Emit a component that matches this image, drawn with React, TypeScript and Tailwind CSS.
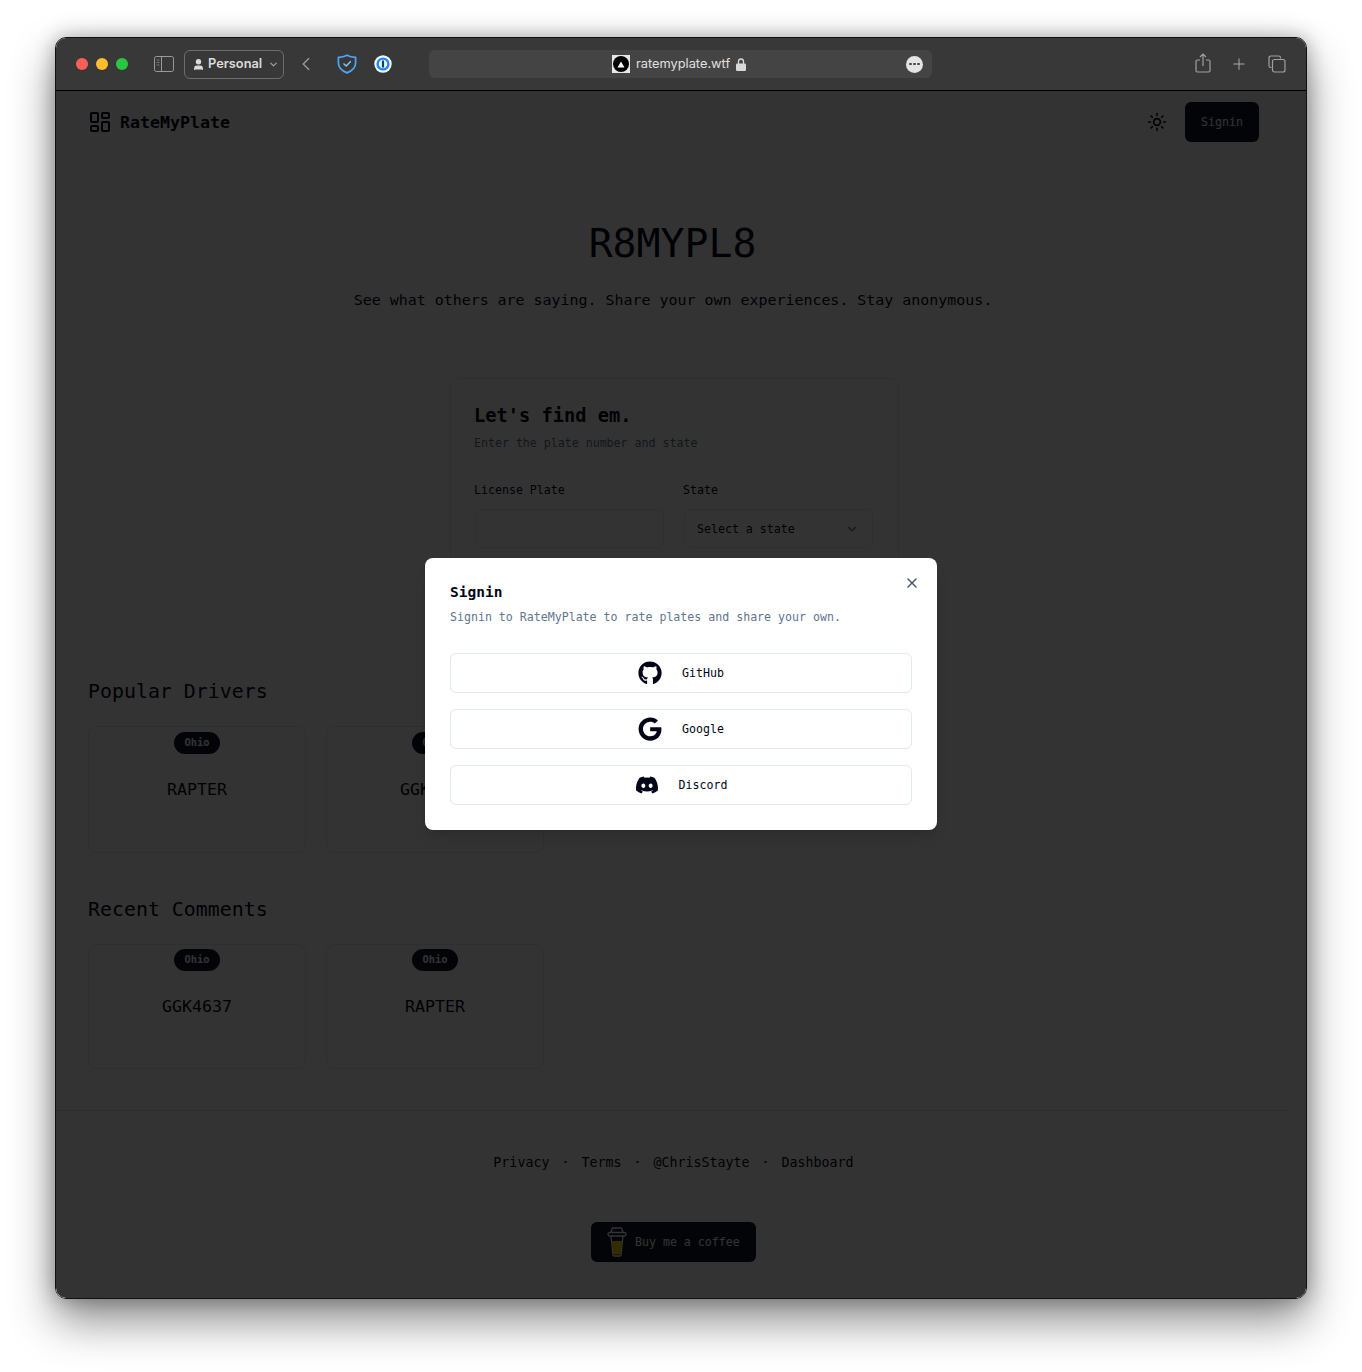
import { ChevronDown, ChevronLeft, LayoutDashboard, Plus, Sun, User, X } from 'lucide-react'
import type { ReactNode } from 'react'
import { FaDiscord, FaGithub, FaGoogle } from 'react-icons/fa'

const mono = 'font-["DejaVu_Sans_Mono","Liberation_Mono",monospace]'

function TitleBar() {
  return (
    <div className='h-[53px] shrink-0 flex items-center pl-5 border-b border-black bg-[#383838] font-["Inter",sans-serif]'>
      <div className="flex items-center gap-2">
        <span className="w-3 h-3 rounded-full bg-[#ff5f57]" />
        <span className="w-3 h-3 rounded-full bg-[#febc2e]" />
        <span className="w-3 h-3 rounded-full bg-[#28c840]" />
      </div>
      <svg className="ml-[26px]" width="20" height="16" viewBox="0 0 20 16" fill="none" stroke="#9a9a9a">
        <rect x="0.5" y="0.5" width="19" height="15" rx="2" />
        <path d="M7.5 1v14" />
        <path d="M2.5 4h3M2.5 6.5h3M2.5 9h3" stroke="#777" />
      </svg>
      <div className="ml-[10px] w-[100px] h-[29px] border border-[#6e6e6e] rounded-md flex items-center pl-[7px] text-[#dcdcdc]">
        <User size={13} fill="#dcdcdc" strokeWidth={2} />
        <span className="ml-[3px] text-[12.8px] font-semibold leading-none">Personal</span>
        <ChevronDown size={11} strokeWidth={2.4} className="ml-[6px] text-[#a5a5a5]" />
      </div>
      <ChevronLeft size={22} strokeWidth={1.5} className="ml-[11px] text-[#9a9a9a]" />
      <svg className="ml-5 mb-px" width="20" height="20" viewBox="0 0 20 20" fill="none" stroke="#4aa8f5" strokeWidth="1.7">
        <path d="M10 1.200C12.500 2.600 15.500 3.200 18.600 3.300V9C18.600 13.600 15 16.800 10 18.900C5 16.800 1.400 13.600 1.400 9V3.300C4.500 3.200 7.500 2.600 10 1.200Z" strokeLinejoin="round" />
        <path d="M6.500 9.500 9.200 12 13.800 7.200" stroke="#86c6f7" strokeWidth="1.4" />
      </svg>
      <svg className="ml-[17px]" width="18" height="18" viewBox="0 0 18 18">
        <circle cx="9" cy="9" r="8.7" fill="#f7f9fc" />
        <circle cx="9" cy="9" r="6.6" fill="#1a8cff" />
        <circle cx="9" cy="9" r="4.2" fill="#f7f9fc" />
        <rect x="7.900" y="5.500" width="2.200" height="7" rx="0.5" fill="#123a66" />
      </svg>
      <div className="ml-[37px] w-[503px] h-[28px] rounded-md bg-[#444444] flex items-center pl-[183px]">
        <span className="w-[18px] h-[18px] bg-[#e8e8e8] flex items-center justify-center">
          <span className="w-4 h-4 rounded-full bg-black flex items-center justify-center">
            <svg width="8" height="7" viewBox="0 0 8 7"><path d="M4 0.5 7.5 6.5H0.5Z" fill="#fff" /></svg>
          </span>
        </span>
        <span className="ml-[6px] pt-px text-[12.8px] leading-none text-[#e0e0e0]">ratemyplate.wtf</span>
        <svg className="ml-[6px]" width="10" height="13" viewBox="0 0 10 13">
          <path d="M2.5 6V3.5a2.5 2.5 0 0 1 5 0V6" fill="none" stroke="#d8d8d8" strokeWidth="1.3" />
          <rect y="5.5" width="10" height="7.5" rx="1.3" fill="#d8d8d8" />
        </svg>
        <span className="ml-[160px] w-[17px] h-[17px] rounded-full bg-[#e4e4e4] flex items-center justify-center gap-[1.5px]">
          <span className="w-[2.5px] h-[2.5px] rounded-full bg-[#444]" />
          <span className="w-[2.5px] h-[2.5px] rounded-full bg-[#444]" />
          <span className="w-[2.5px] h-[2.5px] rounded-full bg-[#444]" />
        </span>
      </div>
      <svg className="ml-[263px] -translate-y-px" width="16" height="20" viewBox="0 0 16 20" fill="none" stroke="#a0a0a0" strokeWidth="1.2">
        <path d="M5 7H2.500A1.500 1.500 0 0 0 1 8.500V17.500A1.500 1.500 0 0 0 2.500 19H13.500A1.500 1.500 0 0 0 15 17.500V8.500A1.500 1.500 0 0 0 13.500 7H11" />
        <path d="M8 13V1M5 4l3-3 3 3" />
      </svg>
      <Plus size={18} strokeWidth={1.4} className="ml-[19px] text-[#a8a8a8]" />
      <svg className="ml-[20px]" width="18" height="18" viewBox="0 0 18 18" fill="none" stroke="#a0a0a0" strokeWidth="1.2">
        <path d="M3.500 12.500H2.800A1.800 1.800 0 0 1 1 10.700V2.800A1.800 1.800 0 0 1 2.800 1H10.700A1.800 1.800 0 0 1 12.500 2.800V3.500" />
        <rect x="4.500" y="4.500" width="12.500" height="12.500" rx="2" />
      </svg>
    </div>
  )
}

function PlateCard({ plate, box, gap }: { plate: string; box: string; gap: string }) {
  return (
    <div className={`w-[218px] ${box} rounded-lg border border-slate-200 flex flex-col items-center`}>
      <span className="w-[46px] h-[22px] rounded-full bg-slate-900 text-slate-50 text-[10.4px] font-semibold flex items-center justify-center">
        Ohio
      </span>
      <span className={`${gap} text-[16.6px] leading-6 text-slate-950`}>{plate}</span>
    </div>
  )
}

function Page() {
  return (
    <div className={`w-[1233px] h-full bg-white text-slate-950 ${mono}`}>
      <header className="h-[61px] flex items-center pl-8 pr-[30px]">
        <LayoutDashboard size={24} strokeWidth={2} />
        <span className="ml-2 pt-[3px] text-[16.6px] font-bold">RateMyPlate</span>
        <Sun size={20} className="ml-auto" />
        <button className="ml-[18px] pt-0.5 w-[74px] h-10 rounded-md bg-slate-900 text-slate-50 text-[11.6px]">Signin</button>
      </header>

      <section className="mt-[61px] flex flex-col items-center">
        <h1 className="text-[39.8px] leading-[60px]">R8MYPL8</h1>
        <p className="mt-[15px] pl-px text-[14.95px] leading-6">
          See what others are saying. Share your own experiences. Stay anonymous.
        </p>
      </section>

      <section className="mt-[66px] ml-[394px] w-[449px] h-[272px] rounded-lg border border-slate-200 pt-[23px] pl-6 pr-6">
        <h2 className="text-[18.7px] leading-7 font-bold -ml-px">Let's find em.</h2>
        <p className="mt-[5px] text-[11.6px] leading-4 text-slate-500 -ml-px">Enter the plate number and state</p>
        <div className="mt-[31px] grid grid-cols-[189px_189px] gap-x-5">
          <label className="text-[11.6px] leading-4 -ml-px">License Plate</label>
          <label className="text-[11.6px] leading-4 -ml-px">State</label>
          <div className="mt-[11px] h-[39px] rounded-md border border-slate-200" />
          <div className="mt-[11px] h-[39px] rounded-md border border-slate-200 flex items-center justify-between pl-3 pr-[13px] text-[11.6px]">
            <span className="pt-0.5">Select a state</span>
            <ChevronDown size={14} className="text-slate-500" />
          </div>
        </div>
      </section>

      <section className="mt-[28px] pl-8">
        <h2 className="text-[19.9px] leading-7">Popular Drivers</h2>
        <div className="mt-5 flex gap-5">
          <PlateCard plate="RAPTER" box="h-[127px] pt-[5px]" gap="mt-6" />
          <PlateCard plate="GGK4637" box="h-[127px] pt-[5px]" gap="mt-6" />
        </div>
      </section>

      <section className="mt-[43px] pl-8">
        <h2 className="text-[19.9px] leading-7">Recent Comments</h2>
        <div className="mt-5 flex gap-5">
          <PlateCard plate="GGK4637" box="h-[125px] pt-1" gap="mt-6" />
          <PlateCard plate="RAPTER" box="h-[125px] pt-1" gap="mt-6" />
        </div>
      </section>

      <footer className="mt-[41px] border-t border-slate-200 flex flex-col items-center">
        <nav className="mt-[42px] pl-0.5 flex items-center text-[13.3px] leading-5">
          <span>Privacy</span>
          <span className="mx-3">·</span>
          <span>Terms</span>
          <span className="mx-3">·</span>
          <span>@ChrisStayte</span>
          <span className="mx-3">·</span>
          <span>Dashboard</span>
        </nav>
        <button className="mt-[49px] ml-0.5 w-[165px] h-10 rounded-md bg-slate-900 text-slate-50 text-[11.6px] flex items-center pl-4 gap-2">
          <svg width="20" height="30" viewBox="0 0 20 30" fill="none" stroke="#fff" strokeWidth="1.3">
            <path d="M4 9 6 28a1.500 1.500 0 0 0 1.500 1H12.500A1.500 1.500 0 0 0 14 28L16 9" />
            <path d="M4.800 14H15.200L13.800 27.500H6.200Z" fill="#ffdd00" stroke="none" />
            <rect x="1" y="5.500" width="18" height="3.500" rx="1.700" />
            <path d="M4 5.500 5 2a1.500 1.500 0 0 1 1.500-1H13.500A1.500 1.500 0 0 1 15 2l1 3.500" />
          </svg>
          <span className="pt-0.5">Buy me a coffee</span>
        </button>
      </footer>
    </div>
  )
}

function ProviderButton({ icon, label }: { icon: ReactNode; label: string }) {
  return (
    <button className="h-10 rounded-md border border-slate-200 flex items-center justify-center gap-5 text-[11.6px] text-slate-950">
      {icon}
      <span className="pt-0.5">{label}</span>
    </button>
  )
}

function SigninModal() {
  return (
    <div className="absolute inset-0 bg-black/80 flex items-center justify-center">
      <div className={`relative mb-px w-[512px] h-[272px] rounded-lg bg-white px-[25px] pt-6 shadow-lg ${mono}`}>
        <X size={16} className="absolute right-[17px] top-[17px] text-slate-600" />
        <h3 className="text-[14.5px] leading-5 font-bold text-slate-950">Signin</h3>
        <p className="mt-[7px] text-[11.6px] leading-4 text-slate-500">
          Signin to RateMyPlate to rate plates and share your own.
        </p>
        <div className="mt-7 flex flex-col gap-4">
          <ProviderButton icon={<FaGithub size={24} />} label="GitHub" />
          <ProviderButton icon={<FaGoogle size={24} />} label="Google" />
          <ProviderButton icon={<FaDiscord size={24} />} label="Discord" />
        </div>
      </div>
    </div>
  )
}

export default function App() {
  return (
    <div className="w-[1362px] h-[1372px] bg-white pt-[37px] pl-[55px]">
      <div className="w-[1252px] h-[1262px] rounded-[11px] border border-[#111] overflow-hidden flex flex-col shadow-[0_22px_45px_rgba(0,0,0,0.45),0_0_20px_rgba(0,0,0,0.3)]">
        <TitleBar />
        <div className="relative flex-1 min-h-0 overflow-hidden bg-white">
          <Page />
          <SigninModal />
        </div>
      </div>
    </div>
  )
}
